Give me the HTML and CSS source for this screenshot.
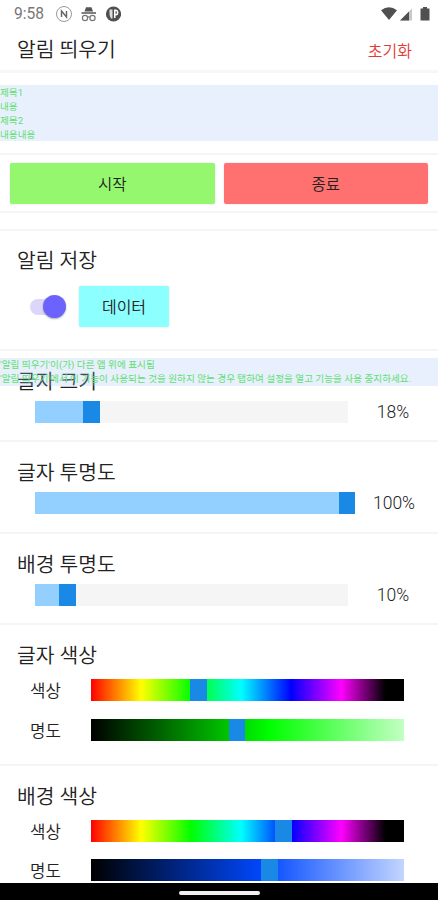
FILE: index.html
```html
<!DOCTYPE html>
<html lang="ko">
<head>
    <meta charset="UTF-8">
    <meta name="viewport" content="width=device-width, initial-scale=1.0">
    <title>알림 띄우기</title>
    <link rel="stylesheet" href="styles.css">
</head>
<body>
    <div class="status-bar">
        <span class="clock">9:58</span>
        <svg class="status-left" width="66" height="18" viewBox="0 0 66 18">
            <circle cx="9" cy="9" r="7.5" fill="none" stroke="#999" stroke-width="1"/>
            <path d="M6.500 12V6L11.500 12V6" fill="none" stroke="#666" stroke-width="1.4"/>
            <path d="M29.500 6.500L31 2.300H36.500L38 6.500ZM26.500 7.300H41V8.800H26.500Z" fill="#555"/>
            <g fill="none" stroke="#777" stroke-width="1.200">
                <circle cx="30" cy="13" r="2.600"/>
                <circle cx="37.500" cy="13" r="2.600"/>
                <path d="M32.600 12.400Q33.700 11.500 34.800 12.400"/>
            </g>
            <circle cx="58.500" cy="9" r="7.600" fill="#505050"/>
            <path d="M54.500 4.500H57.500V13.500H56Q54.500 11 54.500 9Z" fill="#ddd"/>
            <path d="M59 4.500H61Q63.500 5 63.500 7.500T61 10.500H60.500V13H59Z" fill="#fff"/>
            <path d="M60.500 6.300H61.700V8.700H60.500Z" fill="#505050"/>
        </svg>
        <svg class="status-right" width="50" height="18" viewBox="0 0 50 18">
            <path d="M0 5.200Q8 -0.800 16 5.200L8 15Z" fill="#505050"/>
            <path d="M19 15.500L31 3.500V15.500Z" fill="#c8c8c8"/>
            <path d="M19 15.500L28 6.500V15.500Z" fill="#505050"/>
            <path d="M42 2H46V3.500H48.500V15.500H39.500V3.500H42Z" fill="#505050"/>
        </svg>
    </div>

    <header class="header">
        <h1>알림 띄우기</h1>
        <button class="reset">초기화</button>
    </header>

    <div class="preview">
        <div>제목1</div>
        <div>내용</div>
        <div>제목2</div>
        <div>내용내용</div>
    </div>

    <div class="actions">
        <button class="btn btn-start">시작</button>
        <button class="btn btn-stop">종료</button>
    </div>

    <section class="section save">
        <h2>알림 저장</h2>
        <div class="save-row">
            <div class="switch"><div class="switch-thumb"></div></div>
            <button class="btn btn-data">데이터</button>
        </div>
    </section>

    <section class="section size">
        <h2>글자 크기</h2>
        <div class="slider-row">
            <div class="slider"><div class="fill" style="width: 48px"></div><div class="thumb"></div></div>
            <span class="value">18%</span>
        </div>
        <div class="notice">
            <div>'알림 띄우기'이(가) 다른 앱 위에 표시됨</div>
            <div>'알림 띄우기'에서 이 기능이 사용되는 것을 원하지 않는 경우 탭하여 설정을 열고 기능을 사용 중지하세요.</div>
        </div>
    </section>

    <section class="section">
        <h2>글자 투명도</h2>
        <div class="slider-row">
            <div class="slider full"><div class="fill" style="width: 304px"></div><div class="thumb"></div></div>
            <span class="value">100%</span>
        </div>
    </section>

    <section class="section">
        <h2>배경 투명도</h2>
        <div class="slider-row">
            <div class="slider"><div class="fill" style="width: 24px"></div><div class="thumb"></div></div>
            <span class="value">10%</span>
        </div>
    </section>

    <section class="section color">
        <h2>글자 색상</h2>
        <div class="color-row">
            <span class="label">색상</span>
            <div class="slider hue"><div class="thumb" style="margin-left: 99px"></div></div>
        </div>
        <div class="color-row">
            <span class="label">명도</span>
            <div class="slider light-green"><div class="thumb" style="margin-left: 137.5px"></div></div>
        </div>
    </section>

    <section class="section color last">
        <h2>배경 색상</h2>
        <div class="color-row">
            <span class="label">색상</span>
            <div class="slider hue"><div class="thumb" style="margin-left: 184px"></div></div>
        </div>
        <div class="color-row">
            <span class="label">명도</span>
            <div class="slider light-blue"><div class="thumb" style="margin-left: 170px"></div></div>
        </div>
    </section>

    <nav class="nav-bar"><div class="pill"></div></nav>
</body>
</html>
```
FILE: styles.css
```css
* {
    box-sizing: border-box;
}
body {
    margin: 0;
    width: 438px;
    height: 900px;
    overflow: hidden;
    display: flex;
    flex-direction: column;
    background-color: #fff;
    color: #222;
    font-family: Roboto, "Noto Sans CJK KR", sans-serif;
}
body > * {
    flex-shrink: 0;
}
h1, h2 {
    margin: 0;
    font-size: 20.4px;
    font-weight: 350;
    line-height: 30px;
}
button {
    border: none;
    padding: 0;
    font-family: inherit;
    font-weight: 350;
    color: #222;
}

.status-bar {
    display: flex;
    align-items: center;
    height: 28px;
    padding: 0 12px 0 14px;
}
.clock {
    width: 41px;
    font-size: 15.6px;
    color: #777;
}
.status-right {
    margin-left: auto;
    margin-right: -5px;
}

.header {
    display: flex;
    justify-content: space-between;
    align-items: center;
    height: 45px;
    padding: 2px 26px 0 17px;
    border-bottom: 3px solid #f7f7f7;
}
.reset {
    background: none;
    font-size: 16px;
    color: #e53935;
}

.preview {
    height: 56px;
    margin-top: 12px;
    padding-top: 1px;
    background-color: #e8f0fe;
}
.preview,
.notice {
    font-size: 9.65px;
    line-height: 14px;
    color: #5fe070;
    white-space: nowrap;
}

.actions {
    display: grid;
    grid-template-columns: 1fr 1fr;
    gap: 9px;
    height: 60px;
    margin: 12px 0 16px;
    padding: 8px 10px;
    border-top: 2px solid #f5f5f5;
    border-bottom: 2px solid #f5f5f5;
}
.btn {
    height: 41px;
    padding-bottom: 2px;
    border-radius: 2px;
    font-size: 15.5px;
    box-shadow: 0 0 2px rgba(0, 0, 0, 0.15);
}
.btn-start {
    background-color: #95f76e;
}
.btn-stop {
    background-color: #ff7070;
}
.btn-data {
    width: 90px;
    background-color: #8cffff;
    font-size: 16px;
}

.section {
    height: 91.4px;
    padding-top: 16px;
    border-top: 2px solid #f5f5f5;
}
.section h2 {
    padding-left: 17px;
}
.save {
    height: 120px;
    padding-top: 15px;
}
.save-row {
    display: flex;
    align-items: center;
    gap: 13px;
    margin-top: 10px;
    padding-left: 30px;
}
.switch {
    display: flex;
    align-items: center;
    justify-content: flex-end;
    width: 36px;
    height: 16px;
    border-radius: 8px;
    background-color: #dcd6fb;
}
.switch-thumb {
    width: 23px;
    height: 23px;
    border-radius: 50%;
    background-color: #6c63ff;
    box-shadow: 0 1px 2px rgba(0, 0, 0, 0.3);
}

.size {
    position: relative;
}
/* system notification text laid over the section */
.notice {
    position: absolute;
    top: 7px;
    left: 0;
    width: 100%;
    height: 28px;
    background-color: rgba(163, 195, 251, 0.25);
}
.slider-row {
    display: flex;
    align-items: center;
    height: 22px;
    margin-top: 4px;
    padding-left: 35px;
}
.slider {
    display: flex;
    width: 313px;
    height: 22px;
    background-color: #f5f5f5;
}
.full {
    width: 320px;
}
.fill {
    background-color: #93cfff;
}
.thumb {
    width: 16.5px;
    background-color: #1a88e5;
}
.value {
    flex: 1;
    text-align: center;
    font-size: 17.5px;
    font-weight: 350;
}
.slider-row .full + .value {
    padding-right: 5px;
}

.color {
    height: 140.4px;
}
.color-row {
    display: flex;
    align-items: center;
    height: 22px;
    margin-top: 17.5px;
    padding-left: 30px;
}
h2 + .color-row {
    margin-top: 8px;
}
.label {
    width: 61px;
    font-size: 16.8px;
    font-weight: 350;
}
.hue {
    background: linear-gradient(to right, #f00, #ff0 16%, #0f0 32%, #0ff 48%, #00f 64%, #f0f 80%, #000 94%);
}
.light-green {
    background: linear-gradient(to right, #000, #0f0 57%, #c3ffc3);
}
.light-blue {
    background: linear-gradient(to right, #000, #0048ff 55%, #c3d5ff);
}
.last {
    height: 120px;
}

.nav-bar {
    position: fixed;
    left: 0;
    bottom: 0;
    display: flex;
    justify-content: center;
    align-items: center;
    width: 438px;
    height: 17px;
    padding-top: 2px;
    background-color: #000;
}
.pill {
    width: 81px;
    height: 4px;
    border-radius: 2px;
    background-color: #f0f0f0;
}
```
